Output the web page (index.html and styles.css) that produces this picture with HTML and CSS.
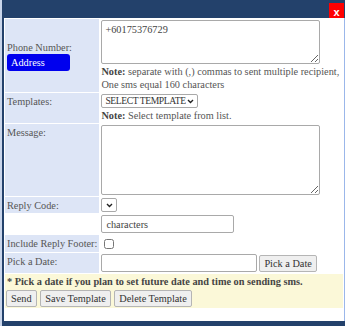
FILE: index.html
```html
<!DOCTYPE html>
<html lang="en">
<head>
    <meta charset="UTF-8">
    <title>Send SMS</title>
    <link rel="stylesheet" href="styles.css">
</head>
<body>
    <div class="dialog">
        <div class="titlebar">
            <span class="close">x</span>
        </div>
        <div class="content">
            <table class="form">
                <tr>
                    <td class="label middle">
                        Phone Number:
                        <div class="address">Address</div>
                    </td>
                    <td class="field">
                        <textarea class="box phone">+60175376729</textarea>
                        <div class="note"><b>Note:</b> separate with (,) commas to sent multiple recipient,<br>One sms equal 160 characters</div>
                    </td>
                </tr>
                <tr>
                    <td class="label">Templates:</td>
                    <td class="field">
                        <select class="select"><option>SELECT TEMPLATE</option></select>
                        <div class="note"><b>Note:</b> Select template from list.</div>
                    </td>
                </tr>
                <tr>
                    <td class="label">Message:</td>
                    <td class="field"><textarea class="box message"></textarea></td>
                </tr>
                <tr>
                    <td class="label">Reply Code:</td>
                    <td class="field"><select class="select small"></select></td>
                </tr>
                <tr>
                    <td class="blank"></td>
                    <td class="field"><input class="input chars" type="text" value="characters"></td>
                </tr>
                <tr>
                    <td class="label">Include Reply Footer:</td>
                    <td class="field"><input class="check" type="checkbox"></td>
                </tr>
                <tr>
                    <td class="label">Pick a Date:</td>
                    <td class="field">
                        <input class="input date" type="text"><button class="btn">Pick a Date</button>
                    </td>
                </tr>
                <tr class="footer">
                    <td colspan="2">
                        <div class="hint">* Pick a date if you plan to set future date and time on sending sms.</div>
                        <div class="actions">
                            <button class="btn">Send</button>
                            <button class="btn">Save Template</button>
                            <button class="btn">Delete Template</button>
                        </div>
                    </td>
                </tr>
            </table>
        </div>
    </div>
</body>
</html>
```

FILE: styles.css
```css
body {
    margin: 0;
    background: #c9d5ea;
    font-family: "Liberation Serif", serif;
    font-size: 10.3px;
    color: #555;
}

.dialog {
    margin-left: 2px;
    width: 343px;
    height: 326px;
    background: #23416b;
    padding: 0 0 5px 2px;
    box-sizing: border-box;
    display: flex;
    flex-direction: column;
}

.titlebar {
    height: 18px;
    display: flex;
    justify-content: flex-end;
    align-items: flex-end;
    flex-shrink: 0;
}

.close {
    background: #ff0000;
    color: #fff;
    font-family: "Liberation Sans", sans-serif;
    font-weight: bold;
    font-size: 11px;
    width: 15px;
    height: 15px;
    line-height: 18px;
    text-align: center;
    margin-right: 1px;
}

.content {
    flex: 1;
    background: #fff;
    border-right: 1px solid #9bb7ea;
}

.form {
    border-collapse: separate;
    border-spacing: 1px;
    width: 100%;
}

.form td {
    padding: 1px 2px;
    vertical-align: top;
}

.form td.label {
    width: 89px;
    background: #dde5f6;
    white-space: nowrap;
    padding-top: 3px;
}

.form td.label.middle {
    vertical-align: middle;
    padding-top: 2px;
}

.address {
    width: 55px;
    background: #0000ee;
    color: #fff;
    border-radius: 3px;
    padding: 2px 4px;
    margin-top: 1px;
    line-height: 13px;
}

.form td.field {
    padding-left: 1px;
}

.box {
    display: block;
    width: 219px;
    box-sizing: border-box;
    border: 1px solid #a9a9a9;
    border-radius: 2px;
    font-family: "Liberation Serif", serif;
    font-size: 10.3px;
    color: #444;
    padding: 3px;
    margin: 0;
    resize: both;
}

.phone { height: 44px; }
.message { height: 70px; }

.note {
    margin-top: 1px;
    line-height: 13px;
}

.note b { color: #444; }

.select {
    -webkit-appearance: none;
    appearance: none;
    font-family: "Liberation Serif", serif;
    font-size: 9.6px;
    letter-spacing: -0.4px;
    color: #333;
    height: 14px;
    border: 1px solid #a9a9a9;
    border-radius: 2px;
    background: #fff url("data:image/svg+xml,%3Csvg xmlns='http://www.w3.org/2000/svg' width='7' height='5'%3E%3Cpath d='M1 1l2.5 2.5L6 1' fill='none' stroke='%23222' stroke-width='1.4'/%3E%3C/svg%3E") no-repeat right 3px center;
    padding: 0 11px 0 3px;
    line-height: 12px;
    margin: 0;
}

.select.small {
    width: 16px;
    padding: 0;
    background-position: center;
}

.input {
    box-sizing: border-box;
    height: 18px;
    border: 1px solid #a9a9a9;
    border-radius: 2px;
    font-family: "Liberation Serif", serif;
    font-size: 10.3px;
    color: #444;
    padding: 0 4px;
    margin: 0;
    vertical-align: middle;
}

.chars { width: 133px; }
.date { width: 156px; }

.check {
    margin: 3px 0 0 3px;
    width: 10px;
    height: 10px;
}

.btn {
    font-family: "Liberation Serif", serif;
    font-size: 10.3px;
    color: #333;
    background: #efefef;
    border: 1px solid #b5b5b5;
    border-radius: 2px;
    height: 17px;
    padding: 0 4px;
    margin: 0 0 0 2px;
    vertical-align: middle;
}

.form tr.footer td {
    background: #fbf8d8;
    padding: 2px 1px 1px 1px;
}

.hint {
    font-weight: bold;
    color: #444;
    padding-left: 1px;
    margin-bottom: 3px;
}

.actions .btn {
    margin: 0 1px 0 0;
}
```
